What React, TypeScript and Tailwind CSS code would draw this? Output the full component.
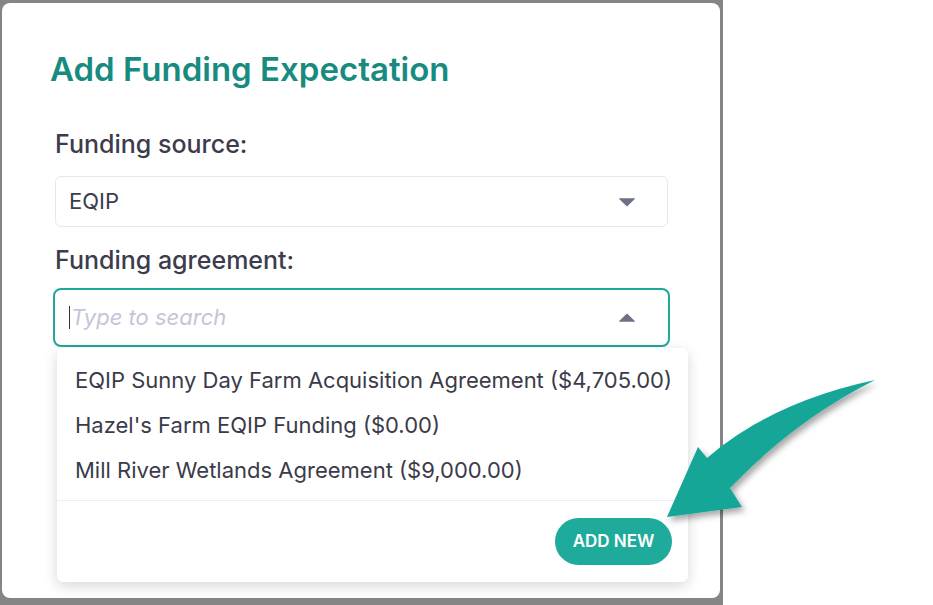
import React from 'react'

const agreements = [
  'EQIP Sunny Day Farm Acquisition Agreement ($4,705.00)',
  "Hazel's Farm EQIP Funding ($0.00)",
  'Mill River Wetlands Agreement ($9,000.00)'
]

function Caret({ up = false }: { up?: boolean }) {
  return (
    <svg width="18" height="10" viewBox="0 0 18 10" className={up ? 'rotate-180' : ''}>
      <path d="M1.5 1.2 H16.5 Q17.4 1.2 16.8 1.9 L9.6 8.9 Q9 9.5 8.4 8.9 L1.2 1.9 Q0.6 1.2 1.5 1.2 Z" fill="#6e7185" />
    </svg>
  )
}

function Arrow() {
  return (
    <svg className="pointer-events-none absolute left-0 top-0" width="933" height="605" viewBox="0 0 933 605">
      <defs>
        <filter id="arrowShadow" x="-20%" y="-20%" width="140%" height="140%">
          <feDropShadow dx="3" dy="4" stdDeviation="3" floodColor="#000" floodOpacity="0.35" />
        </filter>
      </defs>
      <path
        d="M875 380 Q 772 402 707 458 L698 447 L667 517 L742 507 L730 488 Q 795 420 875 380 Z"
        fill="#17a697"
        filter="url(#arrowShadow)"
      />
    </svg>
  )
}

export default function App() {
  return (
    <div className="relative flex h-[605px] w-[933px] bg-white font-['Inter',sans-serif]">
      <div className="flex w-[723px] shrink-0 bg-[#858585] pb-[7px] pl-[2px] pr-[3px] pt-[3px]">
        <div className="relative flex-1 rounded-lg bg-white pl-[53px] pr-[50px] pt-[47px]">
          <h1 className="-ml-[5px] text-[33px] font-semibold leading-[38px] text-[#178b7f]">
            Add Funding Expectation
          </h1>
          <p className="mt-[41px] text-[25px] font-medium leading-[30px] text-[#3c3c4c]">Funding source:</p>
          <div className="mt-[17px] flex h-[51px] w-[613px] items-center justify-between rounded-md border border-[#e6e8ef] pl-[13px] pr-[31px]">
            <span className="text-[22px] text-[#3c3c4c]">EQIP</span>
            <Caret />
          </div>
          <p className="mt-[18px] text-[25px] font-medium leading-[30px] text-[#3c3c4c]">Funding agreement:</p>
          <div className="-ml-[2px] mt-[13px] flex h-[59px] w-[617px] items-center justify-between rounded-lg border-2 border-[#1fa896] pl-[14px] pr-[32px]">
            <div className="flex items-center">
              <span className="h-[23px] w-px bg-[#333]" />
              <span className="ml-px text-[22px] italic text-[#c3c6d6]">Type to search</span>
            </div>
            <Caret up />
          </div>
          <div className="absolute left-[55px] top-[345px] w-[631px] rounded-md bg-white pt-[10px] shadow-[0_4px_14px_rgba(0,0,0,0.16)]">
            <ul className="pb-[7px]">
              {agreements.map((a) => (
                <li key={a} className="pl-[18px] text-[22px] leading-[45px] text-[#3b3b4a]">
                  {a}
                </li>
              ))}
            </ul>
            <div className="h-px bg-[#eceef4]" />
            <div className="flex justify-end pb-[17px] pr-[16px] pt-[17px]">
              <button className="h-[47px] w-[117px] rounded-full bg-[#1fab9c] text-[17px] font-semibold text-white">
                ADD NEW
              </button>
            </div>
          </div>
        </div>
      </div>
      <Arrow />
    </div>
  )
}
